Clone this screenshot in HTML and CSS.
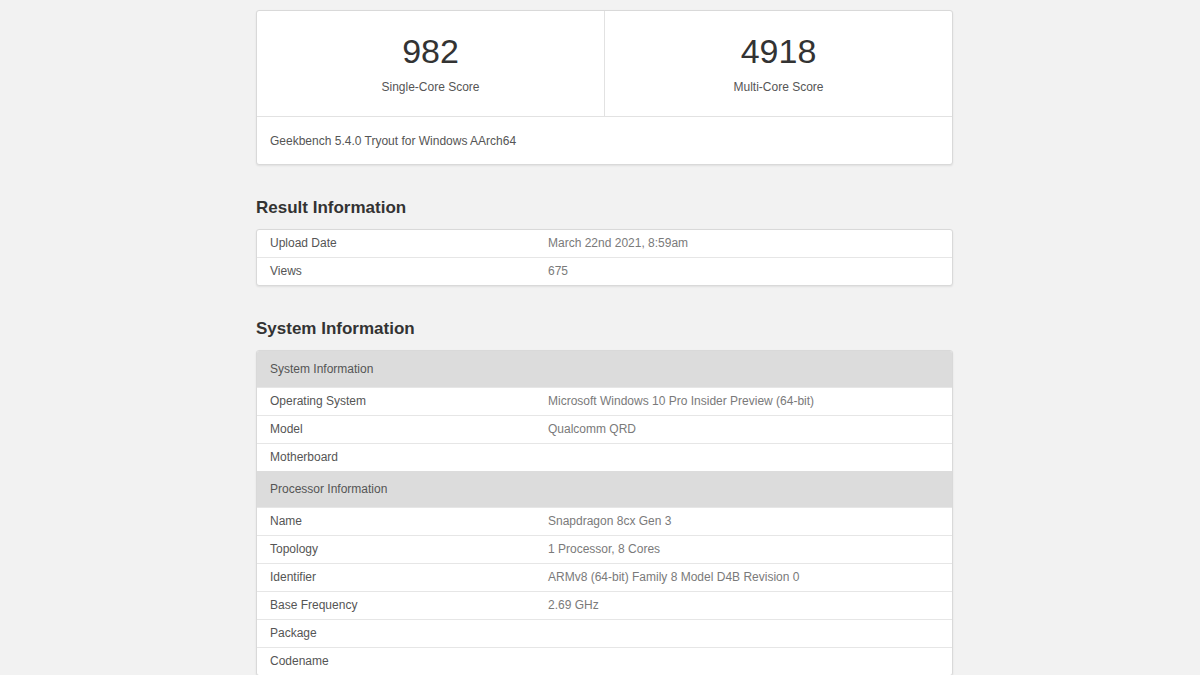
FILE: index.html
```html
<!DOCTYPE html>
<html lang="en">
<head>
  <meta charset="UTF-8">
  <meta name="viewport" content="width=device-width, initial-scale=1.0">
  <title>Geekbench Browser - Result</title>
  <link rel="stylesheet" href="styles.css">
</head>
<body>
  <div class="page">

    <!-- Scores -->
    <div class="card scores">
      <div class="score-row">
        <div class="score">
          <div class="score-value">982</div>
          <div class="score-label">Single-Core Score</div>
        </div>
        <div class="score">
          <div class="score-value">4918</div>
          <div class="score-label">Multi-Core Score</div>
        </div>
      </div>
      <div class="score-footer">Geekbench 5.4.0 Tryout for Windows AArch64</div>
    </div>

    <!-- Result Information -->
    <h2>Result Information</h2>
    <table class="card info">
      <tr><td class="name">Upload Date</td><td class="value">March 22nd 2021, 8:59am</td></tr>
      <tr><td class="name">Views</td><td class="value">675</td></tr>
    </table>

    <!-- System Information -->
    <h2>System Information</h2>
    <table class="card info">
      <tr class="section"><th colspan="2">System Information</th></tr>
      <tr><td class="name">Operating System</td><td class="value">Microsoft Windows 10 Pro Insider Preview (64-bit)</td></tr>
      <tr><td class="name">Model</td><td class="value">Qualcomm QRD</td></tr>
      <tr><td class="name">Motherboard</td><td class="value"></td></tr>
      <tr class="section"><th colspan="2">Processor Information</th></tr>
      <tr><td class="name">Name</td><td class="value">Snapdragon 8cx Gen 3</td></tr>
      <tr><td class="name">Topology</td><td class="value">1 Processor, 8 Cores</td></tr>
      <tr><td class="name">Identifier</td><td class="value">ARMv8 (64-bit) Family 8 Model D4B Revision 0</td></tr>
      <tr><td class="name">Base Frequency</td><td class="value">2.69 GHz</td></tr>
      <tr><td class="name">Package</td><td class="value"></td></tr>
      <tr><td class="name">Codename</td><td class="value"></td></tr>
    </table>

  </div>
</body>
</html>
```

FILE: styles.css
```css
body {
  margin: 0;
  background-color: #f2f2f2;
  font-family: "Liberation Sans", Arial, sans-serif;
  font-size: 12px;
  color: #555;
}
.page {
  width: 697px;
  margin: 10px auto 0;
  padding-left: 9px;
}
.card {
  background-color: #fff;
  border: 1px solid #d9d9d9;
  border-radius: 3px;
  box-shadow: 0 1px 2px rgba(0, 0, 0, 0.08);
}
.scores {
  box-sizing: border-box;
}
.score-row {
  display: flex;
  border-bottom: 1px solid #e2e2e2;
}
.score {
  flex: 1;
  text-align: center;
  padding: 20px 0;
}
.score + .score {
  border-left: 1px solid #e2e2e2;
}
.score-value {
  font-size: 34px;
  line-height: 40px;
  color: #333;
}
.score-label {
  margin-top: 7px;
  line-height: 18px;
  color: #555;
}
.score-footer {
  padding: 15px 13px 14px;
  line-height: 18px;
  color: #555;
}
h2 {
  margin: 32px 0 10px;
  font-size: 17px;
  line-height: 22px;
  font-weight: bold;
  color: #333;
}
.info {
  width: 100%;
  border-collapse: separate;
  border-spacing: 0;
  overflow: hidden;
}
.info td {
  padding: 5px 13px;
  line-height: 17px;
  border-top: 1px solid #e6e6e6;
  vertical-align: middle;
}
.info tr:first-child td {
  border-top: none;
}
.info .name {
  width: 40%;
  color: #555;
}
.info .value {
  color: #7a7a7a;
}
.section th {
  background-color: #dcdcdc;
  text-align: left;
  font-weight: normal;
  color: #555;
  padding: 10px 13px 9px;
  line-height: 17px;
}
```
